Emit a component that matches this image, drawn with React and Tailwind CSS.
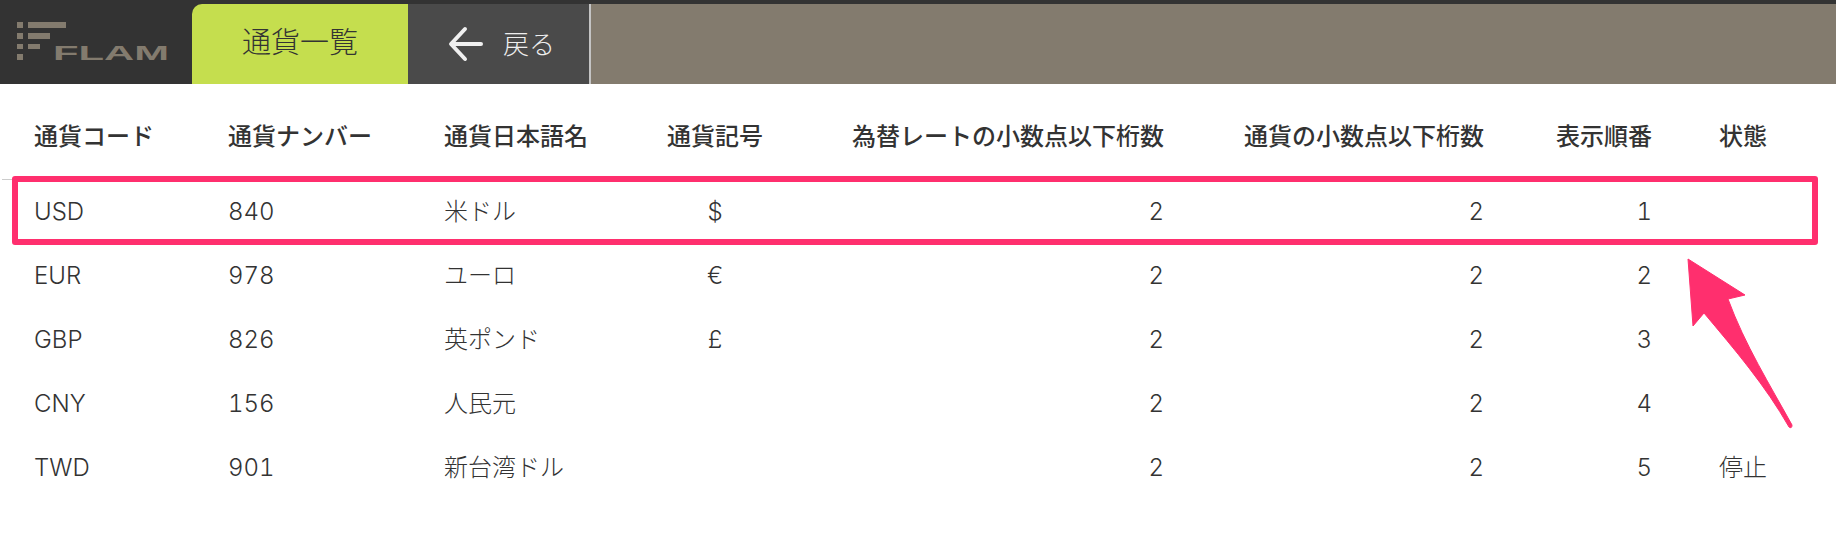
const cols = "grid grid-cols-[194px_216px_223px_96px_401px_320px_168px_1fr] items-center pl-[34px]";

const rows = [
  ["USD", "840", "米ドル", "$", "2", "2", "1", ""],
  ["EUR", "978", "ユーロ", "€", "2", "2", "2", ""],
  ["GBP", "826", "英ポンド", "£", "2", "2", "3", ""],
  ["CNY", "156", "人民元", "", "2", "2", "4", ""],
  ["TWD", "901", "新台湾ドル", "", "2", "2", "5", "停止"],
];

function Logo() {
  return (
    <svg width="168" height="60" viewBox="0 0 168 60" className="ml-[17px] mt-[18px]">
      <g fill="#837b6e">
        <rect x="0" y="0" width="6" height="6" />
        <rect x="11" y="0" width="38" height="6" />
        <rect x="0" y="11" width="6" height="6" />
        <rect x="11" y="11" width="22" height="6" />
        <rect x="0" y="22" width="6" height="5" />
        <rect x="11" y="22" width="12" height="5" />
        <rect x="0" y="32" width="6" height="6" />
        <text x="36" y="38" fontFamily="'Liberation Sans', sans-serif" fontSize="21" fontWeight="700" textLength="116" lengthAdjust="spacingAndGlyphs">
          FLAM
        </text>
      </g>
    </svg>
  );
}

export default function App() {
  return (
    <div className="relative min-h-[538px] bg-white font-['Inter','Noto_Sans_CJK_JP',sans-serif] text-[#333]">
      {/* header */}
      <div className="flex h-[84px] bg-[#837b6e] border-t-4 border-[#333]">
        <div className="w-[192px] bg-[#333]">
          <Logo />
        </div>
        <div className="w-[216px] bg-[#333]">
          <div className="flex h-full items-center justify-center rounded-tl-[10px] bg-[#c5de4e] pb-[2px] text-[29px] font-light text-[#333]">
            通貨一覧
          </div>
        </div>
        <div className="flex w-[183px] items-center gap-[19px] border-r-2 border-[#c4c4c4] bg-[#4a4a4a] pl-[40px] text-[26px] font-light text-[#eee]">
          <svg width="36" height="36" viewBox="0 0 36 36" fill="none" stroke="#f0f0f0" strokeWidth="4" strokeLinecap="round" strokeLinejoin="round">
            <path d="M33 18H4" />
            <path d="M17 3 3 18l14 15" />
          </svg>
          <span>戻る</span>
        </div>
      </div>

      {/* table head */}
      <div className={`${cols} h-[95px] pt-[6px] text-[24px] font-medium font-['Noto_Sans_CJK_JP',sans-serif]`}>
        <div>通貨コード</div>
        <div>通貨ナンバー</div>
        <div>通貨日本語名</div>
        <div className="whitespace-nowrap">通貨記号</div>
        <div className="text-right">為替レートの小数点以下桁数</div>
        <div className="text-right">通貨の小数点以下桁数</div>
        <div className="text-right">表示順番</div>
        <div className="pl-[67px]">状態</div>
      </div>

      {/* table body */}
      <div>
        <div className="ml-[2px] h-px w-[12px] bg-[#ccc]" />
        {rows.map((r) => (
          <div key={r[0]} className={`${cols} h-[64px] text-[24px] font-light tabular-nums`}>
            <div>{r[0]}</div>
            <div>{r[1]}</div>
            <div>{r[2]}</div>
            <div className="text-center">{r[3]}</div>
            <div className="text-right">{r[4]}</div>
            <div className="text-right">{r[5]}</div>
            <div className="text-right">{r[6]}</div>
            <div className="pl-[67px]">{r[7]}</div>
          </div>
        ))}
      </div>

      {/* annotation */}
      <div className="absolute left-[12px] top-[176px] h-[69px] w-[1806px] rounded-[3px] border-[6px] border-[#ff2f6e]" />
      <svg width="1836" height="538" className="absolute left-0 top-0 pointer-events-none">
        <path
          d="M1688 259 L1745 295 L1728 299 C1745 345 1770 385 1792 425 Q1792 429 1789 427 C1765 385 1735 350 1704 313 L1693 326 Z"
          fill="#ff2f6e"
          stroke="#ff2f6e"
          strokeWidth="1"
          strokeLinejoin="round"
        />
      </svg>
    </div>
  );
}
